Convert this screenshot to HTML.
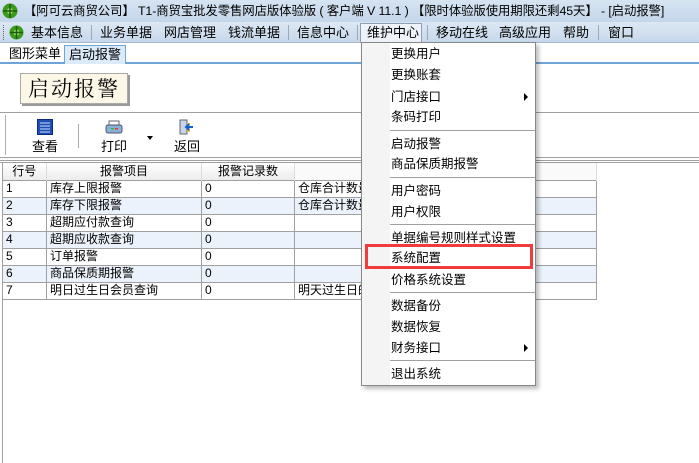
<!DOCTYPE html>
<html><head><meta charset="utf-8"><style>
*{margin:0;padding:0;box-sizing:border-box}
body{width:699px;height:463px;overflow:hidden;background:#fff;font-family:"Liberation Sans","Noto Sans CJK SC",sans-serif;font-size:12px;color:#000;position:relative}
.abs{position:absolute}
#title{left:0;top:0;width:699px;height:22px;background:linear-gradient(#d6e4f2,#c4d6ea);font-size:12.4px;line-height:22px;padding-left:24px;color:#000;white-space:nowrap;overflow:hidden;letter-spacing:-0.1px}
#menubar{left:0;top:22px;width:699px;height:21px;background:linear-gradient(#dce7f3,#c7d8ec);border-bottom:1px solid #a8b8cc}
#menubar span{position:absolute;top:0;line-height:21px;font-size:13px}
.vs{position:absolute;top:3px;width:1px;height:15px;background:#9aa8b8}
#tabs{left:0;top:43px;width:699px;height:21px;background:#fff;border-bottom:2px solid #6fa4d8}
.tab{position:absolute;top:2px;height:19px;line-height:18px;font-size:13px;padding:0 4px}
td{border:1px solid #a0a0a0;height:17px;padding:0 3px;font-size:12px;line-height:15px;white-space:nowrap;overflow:hidden}
.alt td{background:#ebf2fc}
th{font-weight:normal;background:linear-gradient(#fff,#ececec);border-right:1px solid #ddd;height:17px;font-size:12px;line-height:16px}
#menu{left:361px;top:42px;width:175px;height:344px;background:#fff;border:1px solid #888;box-shadow:3px 3px 4px rgba(0,0,0,.25)}
#gut{left:0;top:0;width:28px;height:342px;background:#f4f4f4}
.mi{position:absolute;left:29px;font-size:12.5px;line-height:16px}
.sep{position:absolute;left:28px;width:145px;height:1px;background:#a0a0a0}
.arr{position:absolute;left:162px;width:0;height:0;border-left:4px solid #000;border-top:4px solid transparent;border-bottom:4px solid transparent}
</style></head><body>
<div id="title" class="abs">【阿可云商贸公司】 T1-商贸宝批发零售网店版体验版 ( 客户端 V 11.1 ) 【限时体验版使用期限还剩45天】 - [启动报警]</div>
<svg class="abs" style="left:2px;top:3px" width="16" height="16"><circle cx="8" cy="8" r="7.5" fill="#3c9a1c"/><circle cx="8" cy="8" r="3" fill="#9be070"/><path d="M8 1V15M1 8H15" stroke="#1d5e0a" stroke-width="1.5"/></svg>
<div id="menubar" class="abs">
<div class="abs" style="left:3px;top:3px;width:2px;height:15px;border-left:1px dotted #667"></div>
<svg class="abs" style="left:9px;top:3px" width="15" height="15"><circle cx="7.5" cy="7.5" r="7" fill="#3c9a1c"/><circle cx="7.5" cy="7.5" r="3" fill="#9be070"/><path d="M7.5 1V14M1 7.5H14" stroke="#1d5e0a" stroke-width="1.5"/></svg>
<span style="left:31px">基本信息</span><div class="vs" style="left:91px"></div>
<span style="left:100px">业务单据</span><span style="left:164px">网店管理</span><span style="left:228px">钱流单据</span><div class="vs" style="left:288px"></div>
<span style="left:297px">信息中心</span><div class="vs" style="left:357px"></div>
<div class="abs" style="left:360px;top:1px;width:62px;height:20px;background:#eef3f9;border:1px solid #8f9fb4;border-bottom:none"></div>
<span style="left:367px">维护中心</span><div class="vs" style="left:427px"></div>
<span style="left:436px">移动在线</span><span style="left:499px">高级应用</span><span style="left:563px">帮助</span><div class="vs" style="left:598px"></div>
<span style="left:608px">窗口</span>
</div>
<div id="tabs" class="abs">
<div class="tab" style="left:5px;border-right:1px solid #ccc">图形菜单</div>
<div class="tab" style="left:64px;background:#dcebf9;border:1px solid #6fa4d8;border-bottom:none">启动报警</div>
</div>
<div class="abs" style="left:20px;top:73px;width:108px;height:31px;background:#fdf7e8;border:1px solid #aaa;box-shadow:2px 2px 0 #999;font-family:'Noto Serif CJK SC',serif;font-size:21px;line-height:29px;letter-spacing:2px;text-align:center">启动报警</div>
<div class="abs" style="left:0;top:112px;width:699px;height:1px;background:#a0a0a0"></div>
<div class="abs" style="left:5px;top:115px;width:1px;height:40px;background:#b0b0b0"></div>
<svg class="abs" style="left:37px;top:119px" width="16" height="16"><rect x=".5" y=".5" width="15" height="15" fill="#1d4fb5" stroke="#0c2a77"/><path d="M3 4H13M3 7H13M3 10H13M3 13H13" stroke="#cfe0ff"/></svg>
<div class="abs" style="left:32px;top:136px;font-size:13px">查看</div>
<div class="abs" style="left:78px;top:124px;width:1px;height:24px;background:#aaa"></div>
<svg class="abs" style="left:105px;top:120px" width="18" height="15"><rect x="4" y="1" width="10" height="5" fill="#fff" stroke="#667"/><rect x="1" y="5" width="16" height="8" rx="2" fill="#8ab0dc" stroke="#556"/><rect x="10" y="8" width="3" height="1.5" fill="#e33"/><rect x="6" y="8" width="3" height="1.5" fill="#3b3"/></svg>
<div class="abs" style="left:101px;top:136px;font-size:13px">打印</div>
<div class="abs" style="left:147px;top:136px;border-top:4px solid #000;border-left:3px solid transparent;border-right:3px solid transparent"></div>
<svg class="abs" style="left:178px;top:119px" width="16" height="16"><rect x="2" y="1" width="7" height="14" fill="#c8d4e8" stroke="#667"/><rect x="9" y="4" width="3" height="9" fill="#e8c040"/><path d="M15 8H9M11 5L8 8L11 11" stroke="#1560d0" stroke-width="2" fill="none"/></svg>
<div class="abs" style="left:174px;top:136px;font-size:13px">返回</div>
<div class="abs" style="left:0;top:157px;width:699px;height:1px;background:#a0a0a0"></div>
<div class="abs" style="left:0;top:160px;width:699px;height:1px;background:#a0a0a0"></div>
<div class="abs" style="left:0;top:162px;width:699px;height:1px;background:#a0a0a0"></div>
<div class="abs" style="left:595px;top:163px;width:104px;height:300px;background:#fff"></div>
<div class="abs" style="left:2px;top:163px;width:1px;height:300px;background:#a0a0a0"></div>
<table class="abs" style="left:2px;top:163px;border-collapse:collapse;table-layout:fixed;width:594px">
<colgroup><col style="width:44px"><col style="width:155px"><col style="width:93px"><col style="width:302px"></colgroup>
<tr><th>行号</th><th>报警项目</th><th>报警记录数</th><th style="background:#fafafa"></th></tr>
<tr><td>1</td><td>库存上限报警</td><td>0</td><td>仓库合计数量</td></tr>
<tr class="alt"><td>2</td><td>库存下限报警</td><td>0</td><td>仓库合计数量</td></tr>
<tr><td>3</td><td>超期应付款查询</td><td>0</td><td></td></tr>
<tr class="alt"><td>4</td><td>超期应收款查询</td><td>0</td><td></td></tr>
<tr><td>5</td><td>订单报警</td><td>0</td><td></td></tr>
<tr class="alt"><td>6</td><td>商品保质期报警</td><td>0</td><td></td></tr>
<tr><td>7</td><td>明日过生日会员查询</td><td>0</td><td>明天过生日的</td></tr>
</table>
<div id="menu" class="abs"><div id="gut" class="abs"></div>
<div class="mi" style="top:3px">更换用户</div>
<div class="mi" style="top:24px">更换账套</div>
<div class="mi" style="top:46px">门店接口</div><div class="arr" style="top:50px"></div>
<div class="mi" style="top:66px">条码打印</div>
<div class="sep" style="top:87px"></div>
<div class="mi" style="top:93px">启动报警</div>
<div class="mi" style="top:113px">商品保质期报警</div>
<div class="sep" style="top:134px"></div>
<div class="mi" style="top:140px">用户密码</div>
<div class="mi" style="top:161px">用户权限</div>
<div class="sep" style="top:181px"></div>
<div class="mi" style="top:187px">单据编号规则样式设置</div>
<div class="mi" style="top:207px">系统配置</div>
<div class="mi" style="top:229px">价格系统设置</div>
<div class="sep" style="top:249px"></div>
<div class="mi" style="top:255px">数据备份</div>
<div class="mi" style="top:276px">数据恢复</div>
<div class="mi" style="top:297px">财务接口</div><div class="arr" style="top:301px"></div>
<div class="sep" style="top:317px"></div>
<div class="mi" style="top:323px">退出系统</div>
</div>
<div class="abs" style="left:365px;top:244px;width:168px;height:25px;border:3px solid #f03c3c"></div>
</body></html>
